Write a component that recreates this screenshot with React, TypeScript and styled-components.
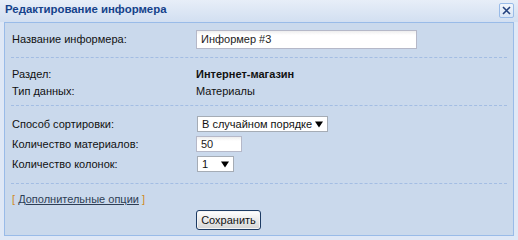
import { createGlobalStyle, styled } from "styled-components";

const Global = createGlobalStyle`
  html, body {
    margin: 0;
    padding: 0;
    background: #dfe8f6;
  }
  body {
    font-family: "Liberation Sans", Arial, sans-serif;
    font-size: 11px;
    color: #000;
  }
`;

const Window = styled.div`
  width: 518px;
  height: 240px;
  box-sizing: border-box;
  display: flex;
  flex-direction: column;
  background: linear-gradient(#e7eef8, #d2dff1 22px, #dfe8f6 22px);
`;

const Header = styled.div`
  height: 22px;
  display: flex;
  align-items: flex-start;
  justify-content: space-between;
  padding: 0 4px 0 5px;
`;

const Title = styled.div`
  font-weight: bold;
  font-size: 11.4px;
  line-height: 18px;
  color: #15428b;
`;

const CloseBtn = styled.div`
  margin-top: 3px;
  width: 13px;
  height: 13px;
  border: 1px solid #99bbe8;
  border-radius: 2px;
  background: linear-gradient(#f2f6fc, #d9e5f5);
  display: flex;
  align-items: center;
  justify-content: center;
`;

const Panel = styled.div`
  margin: 0 4px 4px 4px;
  flex: 1;
  border: 1px solid #99bbe8;
  background: #cad9ec;
  padding: 0 6px 5px 6px;
  display: flex;
  flex-direction: column;
`;

const Section = styled.div<{ $top: number; $bottom: number; $last?: boolean }>`
  padding: ${(p) => p.$top}px 0 ${(p) => p.$bottom}px 0;
  border-bottom: ${(p) => (p.$last ? "none" : "1px dashed #a3bde3")};
`;

const Row = styled.div<{ $h: number }>`
  display: flex;
  align-items: center;
  height: ${(p) => p.$h}px;
`;

const Label = styled.div`
  width: 184px;
  flex-shrink: 0;
  padding-left: 1px;
  color: #111;
  white-space: nowrap;
`;

const Value = styled.div<{ $bold?: boolean }>`
  color: #111;
  font-weight: ${(p) => (p.$bold ? "bold" : "normal")};
  white-space: nowrap;
`;

const TextInput = styled.div<{ $w: number; $h: number }>`
  box-sizing: border-box;
  width: ${(p) => p.$w}px;
  height: ${(p) => p.$h}px;
  border: 1px solid #b5b8c8;
  background: linear-gradient(#eeeeee, #ffffff 4px);
  padding: 0 4px;
  display: flex;
  align-items: center;
  color: #222;
  white-space: nowrap;
`;

const Select = styled.div<{ $w: number }>`
  box-sizing: border-box;
  margin-left: 1px;
  width: ${(p) => p.$w}px;
  height: 16px;
  border: 1px solid #a5acb5;
  background: #fff;
  padding: 0 4px 0 4px;
  display: flex;
  align-items: center;
  justify-content: space-between;
  color: #111;
  white-space: nowrap;
`;

const LinkLine = styled.div`
  height: 16px;
  line-height: 16px;
  padding-left: 1px;
  white-space: nowrap;
`;

const Bracket = styled.span`
  color: #d08a1c;
`;

const MoreLink = styled.a`
  color: #2e3e55;
  text-decoration: underline;
  cursor: pointer;
`;

const Actions = styled.div`
  margin-top: 3px;
  padding-left: 185px;
`;

const Button = styled.button`
  box-sizing: border-box;
  width: 65px;
  height: 20px;
  padding: 0;
  font-family: inherit;
  font-size: 11px;
  color: #111;
  border: 1px solid #1d3b63;
  border-radius: 3px;
  background: linear-gradient(#ffffff, #e6e6e6 60%, #d4d4d4);
  box-shadow: inset 0 0 0 1px #f4f4f4;
`;

const Arrow = () => (
  <svg width="8" height="7" viewBox="0 0 8 7">
    <path d="M0 0.5H8L4 6.5Z" fill="#000" />
  </svg>
);

export default function App() {
  return (
    <>
      <Global />
      <Window>
        <Header>
          <Title>Редактирование информера</Title>
          <CloseBtn>
            <svg width="9" height="9" viewBox="0 0 9 9">
              <path d="M1 1L8 8M8 1L1 8" stroke="#23417e" strokeWidth="1.6" />
            </svg>
          </CloseBtn>
        </Header>
        <Panel>
          <Section $top={6} $bottom={8}>
            <Row $h={20}>
              <Label>Название информера:</Label>
              <TextInput $w={221} $h={19}>
                Информер #3
              </TextInput>
            </Row>
          </Section>
          <Section $top={7} $bottom={6}>
            <Row $h={17}>
              <Label>Раздел:</Label>
              <Value $bold>Интернет-магазин</Value>
            </Row>
            <Row $h={17}>
              <Label>Тип данных:</Label>
              <Value>Материалы</Value>
            </Row>
          </Section>
          <Section $top={8} $bottom={9}>
            <Row $h={20}>
              <Label>Способ сортировки:</Label>
              <Select $w={131}>
                В случайном порядке <Arrow />
              </Select>
            </Row>
            <Row $h={20}>
              <Label>Количество материалов:</Label>
              <TextInput $w={46} $h={16}>
                50
              </TextInput>
            </Row>
            <Row $h={20}>
              <Label>Количество колонок:</Label>
              <Select $w={37}>
                1 <Arrow />
              </Select>
            </Row>
          </Section>
          <Section $top={7} $bottom={0} $last>
            <LinkLine>
              <Bracket>[</Bracket> <MoreLink>Дополнительные опции</MoreLink>{" "}
              <Bracket>]</Bracket>
            </LinkLine>
            <Actions>
              <Button>Сохранить</Button>
            </Actions>
          </Section>
        </Panel>
      </Window>
    </>
  );
}
